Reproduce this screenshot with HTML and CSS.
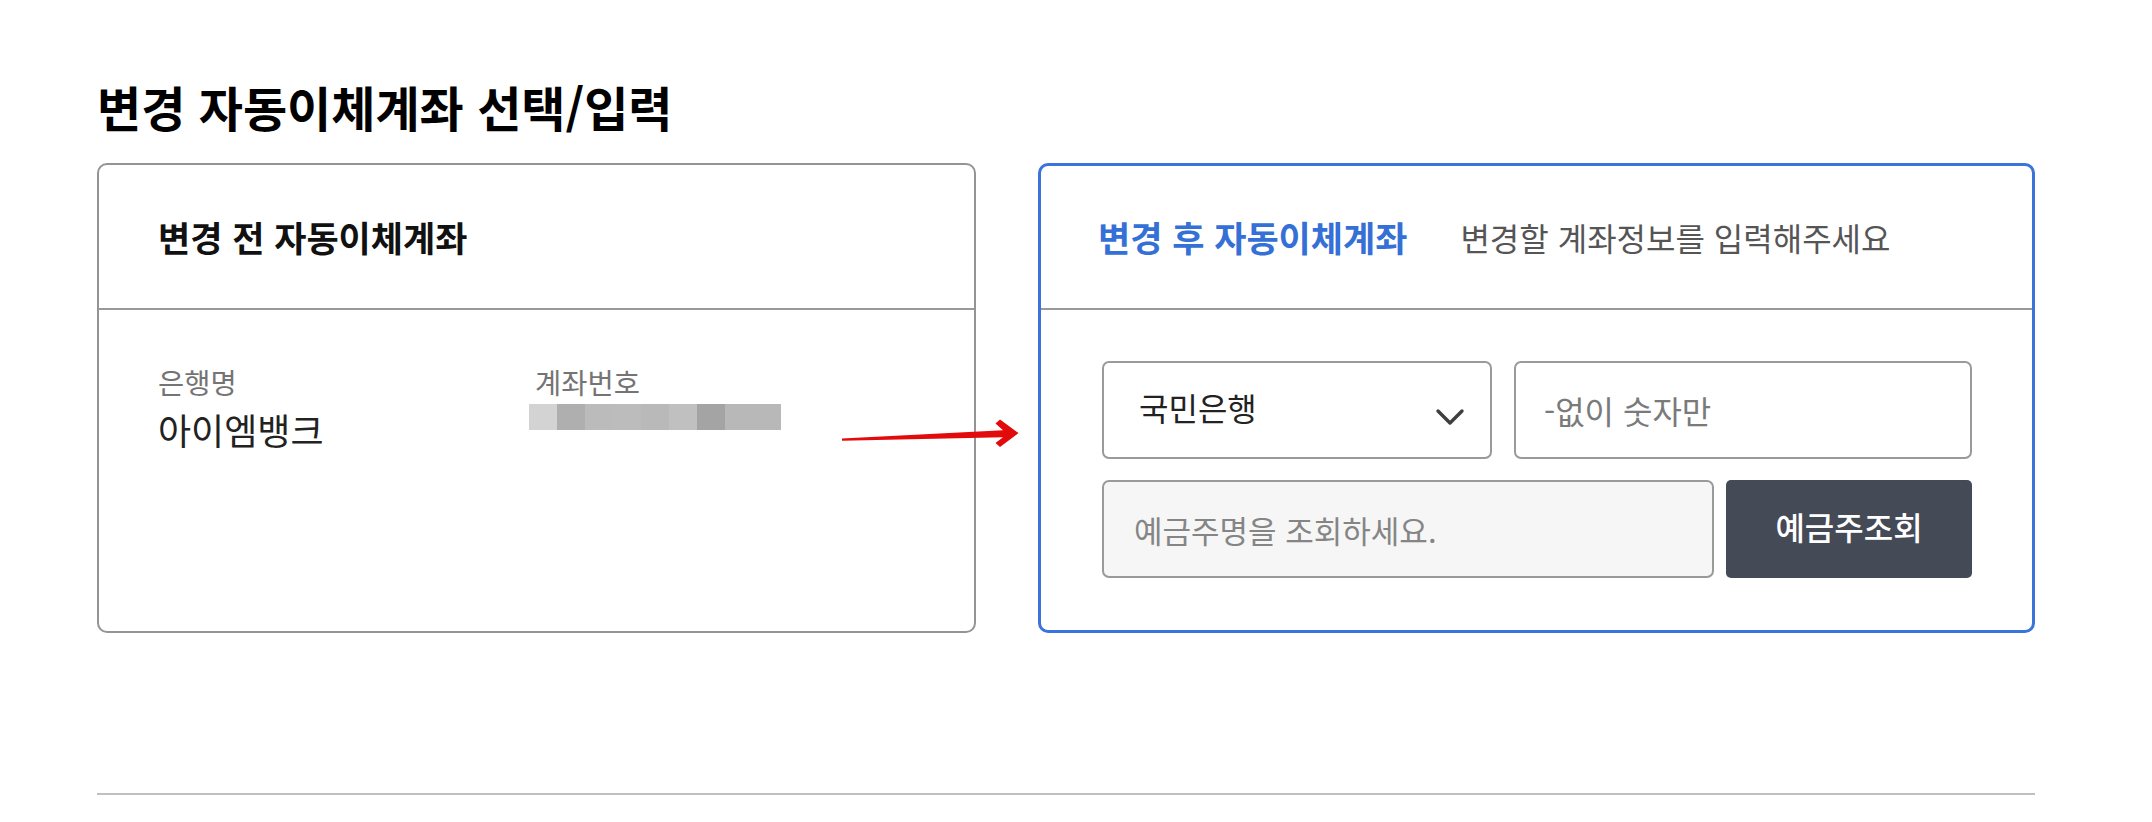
FILE: index.html
```html
<!DOCTYPE html>
<html lang="ko">
<head>
<meta charset="utf-8">
<title>변경 자동이체계좌 선택/입력</title>
<link rel="stylesheet" href="styles.css">
</head>
<body>
<div class="page">
  <h2 class="page-title">변경 자동이체계좌 선택/입력</h2>
  <div class="cards">
    <section class="card card-before">
      <div class="card-head head-before">
        <h3 class="card-title">변경 전 자동이체계좌</h3>
      </div>
      <div class="card-body before-body">
        <div class="info-col bank-col">
          <div class="info-label">은행명</div>
          <div class="info-value">아이엠뱅크</div>
        </div>
        <div class="info-col">
          <div class="info-label">계좌번호</div>
          <div class="masked">
            <span class="px" style="background:#d3d3d3"></span>
            <span class="px" style="background:#afafaf"></span>
            <span class="px" style="background:#bbbbbb"></span>
            <span class="px" style="background:#bcbcbc"></span>
            <span class="px" style="background:#b9b9b9"></span>
            <span class="px" style="background:#c0c0c0"></span>
            <span class="px" style="background:#a4a4a4"></span>
            <span class="px" style="background:#b8b8b8"></span>
            <span class="px" style="background:#b8b8b8"></span>
          </div>
        </div>
      </div>
    </section>
    <section class="card card-after">
      <div class="card-head head-after">
        <h3 class="card-title title-blue">변경 후 자동이체계좌</h3>
        <span class="card-sub">변경할 계좌정보를 입력해주세요</span>
      </div>
      <div class="card-body after-body">
        <div class="form-row row-top">
          <div class="select-box">
            <span class="select-text">국민은행</span>
            <svg class="chev" width="30" height="18" viewBox="0 0 30 18"><path d="M3 3 L15 15 L27 3" fill="none" stroke="#3f3f3f" stroke-width="3.4" stroke-linecap="round" stroke-linejoin="round"/></svg>
          </div>
          <input class="field" type="text" placeholder="-없이 숫자만">
        </div>
        <div class="form-row row-bottom">
          <input class="field field-readonly" type="text" placeholder="예금주명을 조회하세요." readonly>
          <button class="btn-dark" type="button">예금주조회</button>
        </div>
      </div>
    </section>
    <svg class="annot-arrow" width="200" height="50" viewBox="0 0 200 50">
      <polygon points="12,28.4 173,20.2 165.5,13.5 170,9.5 188.5,23 170,37 165.5,33 173,27.3 12,30.8" fill="#e20a0a"/>
    </svg>
  </div>
  <hr class="divider">
</div>
</body>
</html>
```

FILE: styles.css
```css
* { box-sizing: border-box; }
html, body { margin: 0; padding: 0; background: #fff; }
body {
  font-family: "Noto Sans CJK KR", "Noto Sans", sans-serif;
  color: #111;
}
.page {
  width: 1938px;
  margin-left: 97px;
  padding-top: 78px;
}
.page-title {
  margin: 0 0 28px;
  font-size: 48px;
  line-height: 57px;
  font-weight: 700;
  color: #000;
}
.cards {
  position: relative;
  display: flex;
  gap: 62px;
  height: 470px;
}
.card {
  display: flex;
  flex-direction: column;
  border-radius: 10px;
  background: #fff;
}
.card-before {
  width: 879px;
  border: 2px solid #949494;
}
.card-after {
  width: 997px;
  border: 3px solid #3a73dc;
}
.card-head {
  display: flex;
  align-items: center;
  border-bottom: 2px solid #999;
}
.head-before { height: 145px; padding-left: 59px; }
.head-after { height: 144px; padding-left: 57px; }
.card-title {
  margin: 0;
  font-size: 35px;
  line-height: 1.2;
  font-weight: 700;
  color: #111;
}
.title-blue { color: #3570d6; }
.card-sub {
  margin-left: 53px;
  font-size: 32px;
  line-height: 1.2;
  color: #555;
}
.before-body {
  display: flex;
  padding: 57px 0 0 59px;
}
.info-col { display: flex; flex-direction: column; }
.bank-col { width: 377px; }
.info-label {
  font-size: 28.5px;
  line-height: 30px;
  color: #747474;
}
.info-value {
  margin-top: 12px;
  font-size: 36px;
  line-height: 40px;
  color: #222;
}
.masked {
  display: flex;
  margin-top: 7px;
  margin-left: -6px;
  height: 26px;
}
.px { width: 28px; height: 26px; }
.after-body {
  display: flex;
  flex-direction: column;
  gap: 21px;
  padding: 51px 60px 0 61px;
}
.form-row { display: flex; height: 98px; }
.row-top { gap: 22px; }
.row-bottom { gap: 12px; }
.select-box {
  width: 390px;
  display: flex;
  align-items: center;
  justify-content: space-between;
  padding: 0 25px 0 35px;
  border: 2px solid #9a9a9a;
  border-radius: 7px;
  background: #fff;
}
.select-text {
  font-size: 32px;
  line-height: 1.2;
  color: #222;
  margin-top: -6px;
}
.chev { margin-top: 14px; }
.field {
  flex: 1;
  min-width: 0;
  height: 98px;
  padding: 0 28px;
  border: 2px solid #9a9a9a;
  border-radius: 7px;
  font-family: "Noto Sans CJK KR", "Noto Sans", sans-serif;
  font-size: 32px;
  color: #222;
  background: #fff;
  outline: none;
}
.field::placeholder { color: #7a7a7a; }
.field-readonly {
  flex: none;
  width: 612px;
  padding-left: 30px;
  font-size: 31px;
  background: #f6f6f6;
}
.field-readonly::placeholder { color: #858585; }
.btn-dark {
  flex: 1;
  height: 98px;
  border: none;
  border-radius: 5px;
  background: #454a57;
  color: #fff;
  font-family: "Noto Sans CJK KR", "Noto Sans", sans-serif;
  font-size: 32px;
  font-weight: 500;
  padding: 0 0 6px;
}
.annot-arrow {
  position: absolute;
  left: 733px;
  top: 247px;
}
.divider {
  margin: 160px 0 0;
  border: none;
  border-top: 2px solid #c0c0c0;
  height: 0;
}
```
